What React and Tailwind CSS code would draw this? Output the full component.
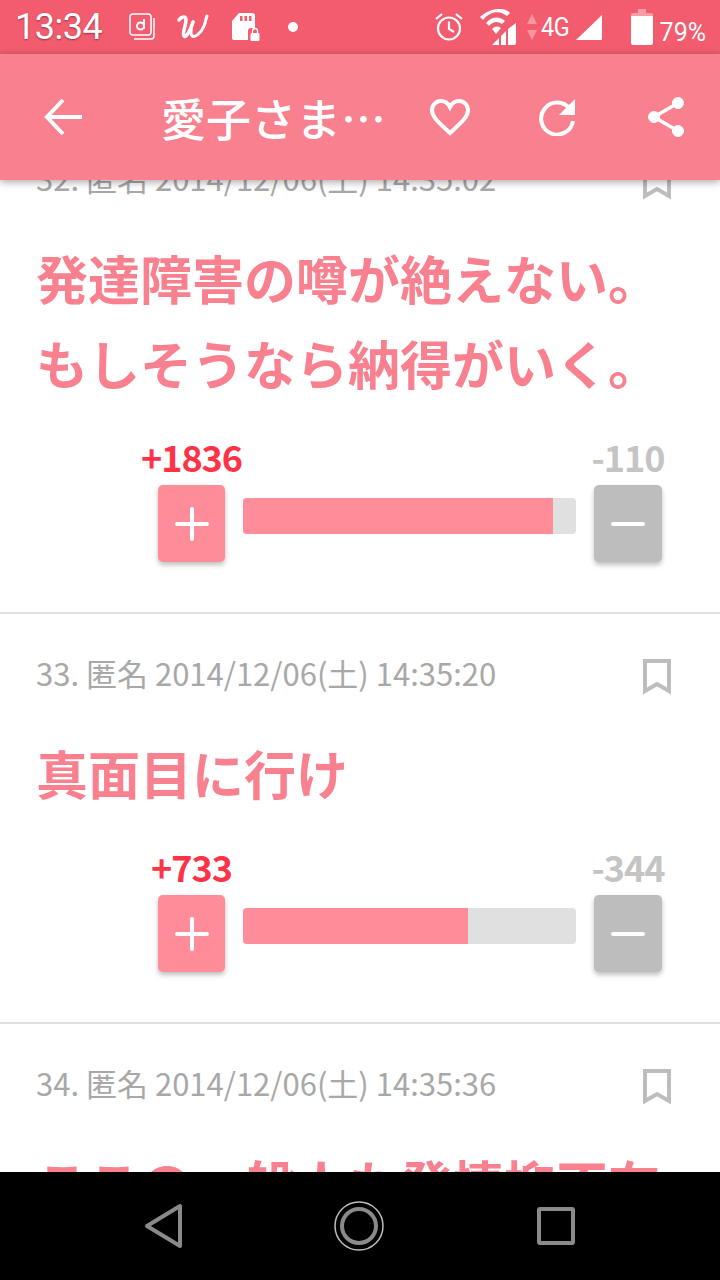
const posts = [
  { no: 32, date: '2014/12/06(土) 14:35:02', lines: ['発達障害の噂が絶えない。', 'もしそうなら納得がいく。'], plus: 1836, minus: 110, pct: 93 },
  { no: 33, date: '2014/12/06(土) 14:35:20', lines: ['真面目に行け'], plus: 733, minus: 344, pct: 67.6 },
];

function StatusBar() {
  return (
    <div className="h-[54px] shrink-0 bg-[#f25c6e] flex items-center text-white relative">
      <span className="ml-[15px] text-[36px] leading-none tracking-[-0.5px] font-['Roboto',sans-serif] [text-shadow:0_1px_2px_rgba(0,0,0,0.4)]">13:34</span>
      {/* docomo d */}
      <svg className="ml-[27px]" width="28" height="28" viewBox="0 0 28 28" fill="none" stroke="white">
        <rect x="1" y="1" width="21" height="21" rx="3" strokeWidth="1.5" />
        <path d="M25 5v18a3 3 0 0 1-3 3H5" strokeWidth="1.5" />
        <circle cx="11.5" cy="13" r="3.5" strokeWidth="2" />
        <path d="M15 6v10" strokeWidth="2" />
      </svg>
      {/* script w logo */}
      <svg className="ml-[20px]" width="32" height="28" viewBox="0 0 32 28" fill="none" stroke="white" strokeLinecap="round" strokeLinejoin="round">
        <path d="M2 7c3-4 7-4 7 0 0 6-4 12-2 16 2 2 5-3 9-14" strokeWidth="3.5" />
        <path d="M16 9c-2 6-3 11-1 14 3 2 9-3 12-10 2-5 2-8 3-10" strokeWidth="3" />
      </svg>
      {/* sd card */}
      <svg className="ml-[22px]" width="30" height="30" viewBox="0 0 30 30" fill="white">
        <path d="M8 1h13a3 3 0 0 1 3 3v12h-4a3 3 0 0 0-3 3v9H3a2 2 0 0 1-2-2V9z" />
        <rect x="9" y="4" width="2.5" height="5" fill="#f25c6e" />
        <rect x="13.5" y="4" width="2.5" height="5" fill="#f25c6e" />
        <rect x="18" y="4" width="2.5" height="5" fill="#f25c6e" />
        <rect x="19.5" y="21" width="9" height="8" rx="1" />
        <path d="M21.5 21v-2a2.5 2.5 0 0 1 5 0v2" fill="none" stroke="white" strokeWidth="1.3" />
      </svg>
      <span className="ml-[27px] w-[10px] h-[10px] rounded-full bg-white" />

      <div className="ml-auto flex items-center">
        {/* alarm */}
        <svg width="30" height="30" viewBox="0 0 30 30" fill="none" stroke="white" strokeWidth="2.2">
          <circle cx="15" cy="16.5" r="11" />
          <path d="M15 9.5v7.5l5 3" />
          <path d="M2 7l6-5M28 7l-6-5" />
        </svg>
        {/* wifi + signal */}
        <svg className="ml-[15px]" width="40" height="38" viewBox="0 0 40 38" fill="white">
          <path d="M1 9C11-1 27-1 31 5l-3 3C21 2 11 3 4 12z" />
          <path d="M7 15c6-7 14-7 19-2l-3 3c-4-3-9-3-13 2z" />
          <path d="M13 21c3-3 6-3 9-1l-5 6z" />
          <path d="M13 37l7-7v7zM22 28l5-5v14h-5zM29 21l8-6v20a2 2 0 0 1-2 2h-6z" />
        </svg>
        <svg className="ml-[7px]" width="12" height="32" viewBox="0 0 12 32" fill="white" fillOpacity="0.35">
          <path d="M6 3l5 10H1zM6 29L1 19h10z" />
        </svg>
        <span className="ml-[3px] text-[26px] leading-none tracking-[-0.5px] font-['Roboto',sans-serif] scale-x-90 origin-left w-[30px]">4G</span>
        <svg className="ml-[4px]" width="28" height="27" viewBox="0 0 28 27" fill="white">
          <path d="M1 26L27 1v24a1 1 0 0 1-1 1z" />
        </svg>
        {/* battery */}
        <svg className="ml-[28px]" width="22" height="36" viewBox="0 0 22 36" fill="white">
          <path d="M7 0h8v4h5a2 2 0 0 1 2 2v1H0V6a2 2 0 0 1 2-2h5z" fillOpacity="0.4" />
          <path d="M0 7h22v27a2 2 0 0 1-2 2H2a2 2 0 0 1-2-2z" />
        </svg>
        <span className="ml-[7px] mr-[14px] mt-[10px] text-[25px] leading-none font-['Roboto',sans-serif]">79%</span>
      </div>
    </div>
  );
}

function Header() {
  return (
    <div className="h-[126px] shrink-0 bg-[#f9808e] relative z-10 shadow-[0_2px_8px_rgba(0,0,0,0.35)] flex items-center text-white">
      <svg className="ml-[43px]" width="40" height="40" viewBox="0 0 40 40" fill="none" stroke="white" strokeWidth="4">
        <path d="M39 20H5M20 3L4 20l16 17" />
      </svg>
      <span className="ml-[78px] w-[227px] whitespace-nowrap text-[45px] leading-none font-medium font-['Noto_Sans_CJK_JP',sans-serif]">愛子さま…</span>
      <svg className="ml-[41px]" width="42" height="38" viewBox="0 0 42 38" fill="none" stroke="white" strokeWidth="4">
        <path d="M21 35C9 24 3 19 3 12c0-5 4-9 9-9 4 0 7 2 9 6 2-4 5-6 9-6 5 0 9 4 9 9 0 7-6 12-18 23z" />
      </svg>
      <svg className="ml-[68px]" width="38" height="38" viewBox="0 0 38 38" fill="none">
        <path d="M31 11a16 16 0 1 0 3 12" stroke="white" strokeWidth="4" />
        <path d="M36 1v16H20z" fill="white" />
      </svg>
      <svg className="ml-[71px]" width="38" height="40" viewBox="0 0 38 40" fill="white" stroke="white">
        <circle cx="30" cy="6" r="5.5" />
        <circle cx="6" cy="20" r="5.5" />
        <circle cx="30" cy="34" r="5.5" />
        <path d="M30 6L6 20l24 14" fill="none" strokeWidth="3.5" />
      </svg>
    </div>
  );
}

function Bookmark() {
  return (
    <svg width="28" height="36" viewBox="0 0 28 36" fill="none" stroke="#bdbdbd" strokeWidth="4">
      <path d="M2 2h24v30l-12-7-12 7z" />
    </svg>
  );
}

function Meta({ no, date }) {
  return (
    <div className="flex items-center justify-between pl-[36px] pr-[49px] h-[40px]">
      <span className="mb-[10px] text-[31px] leading-none text-[#a8a8a8] whitespace-nowrap">{no}. 匿名 {date}</span>
      <Bookmark />
    </div>
  );
}

function Votes({ plus, minus, pct }) {
  return (
    <div className="mt-[33px] h-[124px] ml-[158px] mr-[58px]">
      <div className="flex items-start justify-between h-[47px] leading-none">
        <span className="w-[67px] text-[36px] font-bold text-[#ff3347] whitespace-nowrap flex justify-center tracking-[-1px]">+{plus}</span>
        <span className="w-[68px] text-[36px] font-bold text-[#c4c4c4] whitespace-nowrap flex justify-center tracking-[-1px]">-{minus}</span>
      </div>
      <div className="flex items-start">
        <button className="w-[67px] h-[77px] rounded-[5px] bg-[#ff8c99] shadow-[0_3px_5px_rgba(0,0,0,0.25)] flex items-center justify-center">
          <svg width="34" height="34" viewBox="0 0 34 34" stroke="white" strokeWidth="4" strokeLinecap="round">
            <path d="M17 2v30M2 17h30" />
          </svg>
        </button>
        <div className="flex-1 mx-[18px] mt-[13px] h-[36px] rounded-[4px] bg-[#e0e0e0] overflow-hidden">
          <div className="h-full bg-[#ff8c99]" style={{ width: `${pct}%` }} />
        </div>
        <button className="w-[68px] h-[77px] rounded-[5px] bg-[#bdbdbd] shadow-[0_3px_5px_rgba(0,0,0,0.25)] flex items-center justify-center">
          <svg width="34" height="6" viewBox="0 0 34 6" stroke="white" strokeWidth="4" strokeLinecap="round">
            <path d="M2 3h30" />
          </svg>
        </button>
      </div>
    </div>
  );
}

function Title({ lines }) {
  return (
    <div className="mt-[33px] px-[36px]">
      {lines.map((l) => (
        <p key={l} className="text-[52px] leading-[85px] font-bold text-[#f9808e] whitespace-nowrap">{l}</p>
      ))}
    </div>
  );
}

function Post({ post }) {
  return (
    <div className="pt-[43px] pb-[50px] border-b-2 border-[#e0e0e0]">
      <Meta no={post.no} date={post.date} />
      <Title lines={post.lines} />
      <Votes plus={post.plus} minus={post.minus} pct={post.pct} />
    </div>
  );
}

export default function App() {
  return (
    <div className="w-[720px] h-[1280px] overflow-hidden flex flex-col bg-white font-['Noto_Sans_CJK_JP','Noto_Sans',sans-serif]">
      <StatusBar />
      <Header />
      <div className="flex-1 min-h-0 overflow-hidden">
        <div className="-mt-[61px]">
          {posts.map((p) => <Post key={p.no} post={p} />)}
          <div className="pt-[43px]">
            <Meta no={34} date="2014/12/06(土) 14:35:36" />
            <Title lines={['ここの一般人も発情抑不在']} />
          </div>
        </div>
      </div>
      <div className="h-[108px] shrink-0 bg-black flex items-center justify-center">
        <svg className="ml-[-2px]" width="40" height="46" viewBox="0 0 40 46" fill="none" stroke="#8a8a8a" strokeWidth="4" strokeLinejoin="round">
          <path d="M36 3v40L3 23z" />
        </svg>
        <svg className="ml-[150px]" width="50" height="50" viewBox="0 0 50 50" fill="none">
          <circle cx="25" cy="25" r="24" stroke="#bdbdbd" strokeWidth="1.5" />
          <circle cx="25" cy="25" r="17" stroke="#8a8a8a" strokeWidth="4" />
        </svg>
        <svg className="ml-[153px]" width="38" height="38" viewBox="0 0 38 38" fill="none" stroke="#8a8a8a" strokeWidth="4" strokeLinejoin="round">
          <rect x="2" y="2" width="34" height="34" rx="1" />
        </svg>
      </div>
    </div>
  );
}
